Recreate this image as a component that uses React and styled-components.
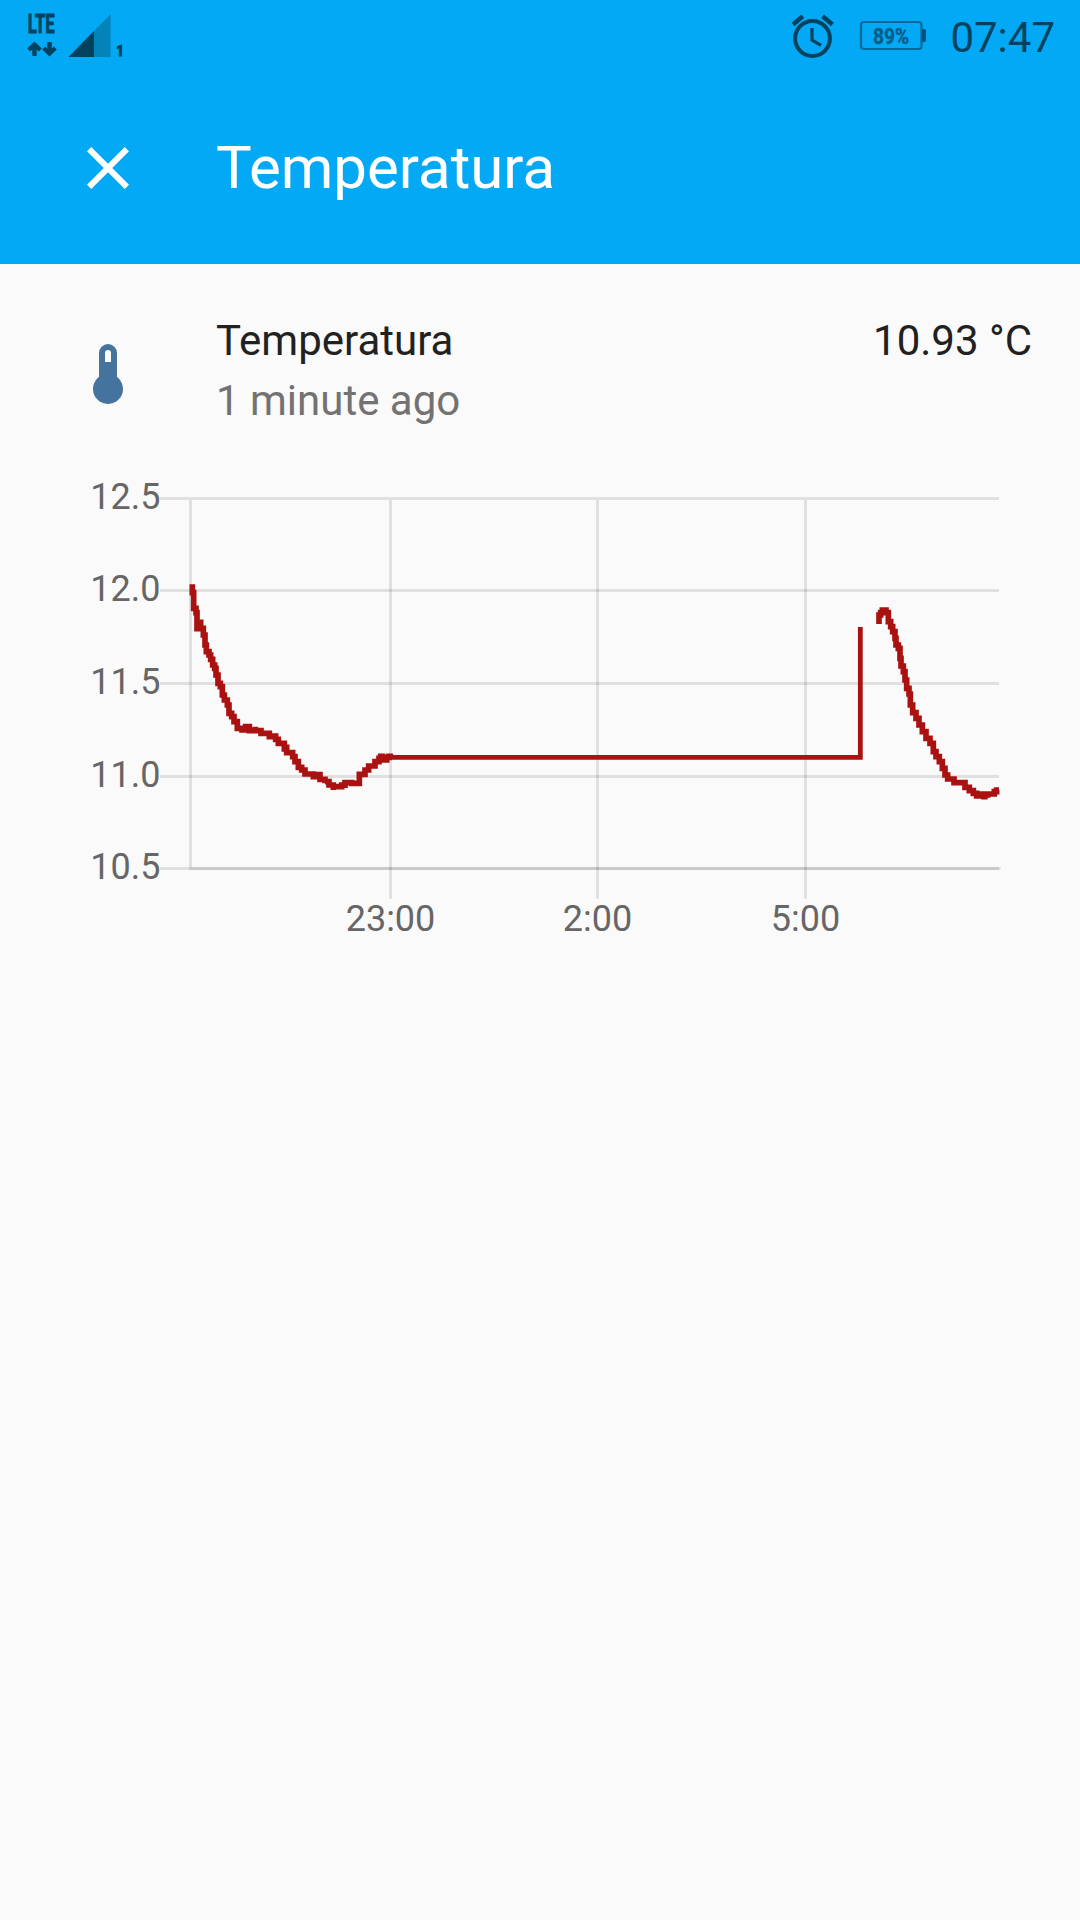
import React from 'react';
import styled, { createGlobalStyle } from 'styled-components';

const GlobalStyle = createGlobalStyle`
  * { box-sizing: border-box; }
  body { margin: 0; background: #fafafa; font-family: Roboto, sans-serif; }
`;

const Screen = styled.main`
  display: flex;
  flex-direction: column;
  min-height: 1920px;
  background: #fafafa;
`;

const Header = styled.header`
  background: #03a9f4;
`;

const StatusBar = styled.div`
  display: flex;
  justify-content: space-between;
  height: 72px;
  padding-right: 25px;
`;

const StatusGroup = styled.div`
  display: flex;
  align-items: center;
`;

const Clock = styled.time`
  margin-left: 20px;
  padding-top: 3px;
  font-size: 42px;
  line-height: 72px;
  color: #01435f;
`;

const Toolbar = styled.div`
  display: flex;
  align-items: center;
  gap: 72px;
  height: 192px;
  padding: 0 72px;
  color: #fff;
`;

const CloseButton = styled.button`
  display: flex;
  padding: 0;
  border: 0;
  background: none;
  color: inherit;
`;

const Title = styled.h1`
  margin: 0;
  font-size: 60px;
  font-weight: 400;
  line-height: 72px;
`;

const Content = styled.section`
  display: flex;
  flex-direction: column;
  gap: 36px;
  padding: 47px 48px 0;
`;

const StateRow = styled.div`
  display: flex;
  gap: 48px;
  height: 123px;
  font-size: 42px;
  line-height: 60px;
`;

const Badge = styled.div`
  display: flex;
  align-items: center;
  justify-content: center;
  width: 120px;
  height: 126px;
  color: #44739e;
`;

const Info = styled.div`
  flex: 1;
`;

const Line = styled.div`
  color: ${(p) => (p.$secondary ? '#727272' : '#212121')};
`;

const Chart = styled.svg`
  display: block;
`;

const AxisLabel = styled.text`
  font-size: 36px;
  fill: #666;
`;

const Series = styled.path`
  fill: none;
  stroke: #aa1111;
  stroke-width: ${(p) => (p.$steady ? 14.4 : 17)};
  stroke-linejoin: miter;
`;

const Icon = ({ path }) => (
  <svg width="72" height="72" viewBox="0 0 24 24" fill="currentColor">
    <path d={path} />
  </svg>
);

const CLOSE = 'M19 6.41L17.59 5L12 10.59L6.41 5L5 6.41L10.59 12L5 17.59L6.41 19L12 13.41L17.59 19L19 17.59L13.41 12z';
const THERMOMETER =
  'M17 17a5 5 0 0 1-5 5a5 5 0 0 1-5-5c0-1.64.79-3.09 2-4V5a3 3 0 0 1 3-3a3 3 0 0 1 3 3v8c1.21.91 2 2.36 2 4m-6-9h2V5a1 1 0 0 0-1-1a1 1 0 0 0-1 1v3z';

const SignalIcon = () => (
  <svg width="130" height="72" viewBox="0 0 130 72" fill="#01435f">
    <text x="27.8" y="33.3" fontSize="26" fontWeight="700" stroke="#01435f" strokeWidth="0.9" textLength="27" lengthAdjust="spacingAndGlyphs">LTE</text>
    <g fill="none" stroke="#01435f" strokeWidth="4.4">
      <path d="M34.5 56V45M28.7 50L34.5 44.5L40.3 50" />
      <path d="M49.5 42V53M43.7 48L49.5 53.5L55.3 48" />
    </g>
    <path d="M110.7 14V57H68.5Z" fill="#0284bb" />
    <path d="M94 31V57H68.5Z" />
    <text x="116" y="55.8" fontSize="15" fontWeight="900" stroke="#01435f" strokeWidth="0.8" textLength="8" lengthAdjust="spacingAndGlyphs">1</text>
  </svg>
);

const AlarmIcon = () => (
  <svg width="50" height="72" viewBox="790 0 50 72" fill="none" stroke="#01435f" strokeWidth="4">
    <circle cx="812.5" cy="38.5" r="17.4" />
    <path d="M793 24.4L802.8 16.3M832.4 24.4L822.6 16.3" strokeWidth="4.6" />
    <path d="M812 28V40L821 45.4" strokeWidth="3.2" />
  </svg>
);

const BatteryIcon = () => (
  <svg width="90" height="72" viewBox="840 0 90 72" fill="#025f89">
    <rect x="861" y="22" width="60.5" height="27" rx="3" fill="none" stroke="#026a99" strokeWidth="2.2" />
    <path d="M922 29h2a2 2 0 0 1 2 2v9a2 2 0 0 1-2 2h-2z" fill="#01537a" />
    <text x="873" y="43.8" fontSize="22" fontWeight="700" stroke="#025f89" strokeWidth="0.5" textLength="36" lengthAdjust="spacingAndGlyphs">89%</text>
  </svg>
);

const yTicks = [
  { label: '12.5', y: 498.5, base: 508.8 },
  { label: '12.0', y: 590.5, base: 601 },
  { label: '11.5', y: 683.5, base: 694 },
  { label: '11.0', y: 776.5, base: 787 },
  { label: '10.5', y: 868.5, base: 878.8 },
];
const xTicks = [
  { label: '23:00', x: 390.5 },
  { label: '2:00', x: 597.5 },
  { label: '5:00', x: 805.5 },
];

const EVENING =
  'M37 43V68H41V115H48V128H51V176H54V157H62V175H70V195H75V225H79V245H87V255H92V268H98V285H104V295H108V315H114V340H121V350H127V375H133V390H142V405H147V430H155V440H162V455H172V475H186V488V480H197V470H208V482H226V470V482H243V490H268V500H278V498H287V508H295V520H313V545V532H320V548H338V560H345V575H355V592H365V600H375V612H400V620H412V614H420V628H435V640V635H447V645H460V660V650H485V645H495V654V638H515V640H538V625V613H555V600H566V588H585V575H597V565H602V559H607V570H620V562H627V559H631V562';
const NIGHT = 'M625 562H2041V171';
const MORNING =
  'M117 102V75H122V68H127V60H138V68H145V95H152V110H158V125H165V145H168V165H175V175H180V205H183V228H190V245H195V270H200V295H207V312H211V345H218V368H228V385H237V405H247V425H258V445H270V460H280V485H288V500H298V515H307V535H315V555H323V567H342V578H358V583V578H375V592H388V602H400V610H410V618H417V612H432V620H443V623V612H455H463V605H470V600H477';

const TemperatureChart = () => (
  <Chart width="984" height="480" viewBox="48 470 984 480">
    <g stroke="#000" strokeOpacity="0.1" strokeWidth="3">
      {yTicks.map((t) => (
        <path key={t.label} d={`M160 ${t.y}H999`} />
      ))}
      <path d="M190.5 500V867" />
      {xTicks.map((t) => (
        <path key={t.label} d={`M${t.x} 500V898.7`} />
      ))}
      <path d="M189 868.5H1000.7" />
    </g>
    {yTicks.map((t) => (
      <AxisLabel key={t.label} x="160.5" y={t.base} textAnchor="end">{t.label}</AxisLabel>
    ))}
    {xTicks.map((t) => (
      <AxisLabel key={t.label} x={t.x} y="930.7" textAnchor="middle">{t.label}</AxisLabel>
    ))}
    <g transform="translate(180 570) scale(0.33333)">
      <Series d={EVENING} />
      <Series $steady d={NIGHT} />
    </g>
    <Series transform="translate(840 590) scale(0.33333)" d={MORNING} />
  </Chart>
);

export default function App() {
  return (
    <Screen>
      <GlobalStyle />
      <Header>
        <StatusBar>
          <StatusGroup>
            <SignalIcon />
          </StatusGroup>
          <StatusGroup>
            <AlarmIcon />
            <BatteryIcon />
            <Clock>07:47</Clock>
          </StatusGroup>
        </StatusBar>
        <Toolbar>
          <CloseButton aria-label="Close">
            <Icon path={CLOSE} />
          </CloseButton>
          <Title>Temperatura</Title>
        </Toolbar>
      </Header>
      <Content>
        <StateRow>
          <Badge>
            <Icon path={THERMOMETER} />
          </Badge>
          <Info>
            <Line>Temperatura</Line>
            <Line $secondary>1 minute ago</Line>
          </Info>
          <Line>10.93 °C</Line>
        </StateRow>
        <TemperatureChart />
      </Content>
    </Screen>
  );
}
